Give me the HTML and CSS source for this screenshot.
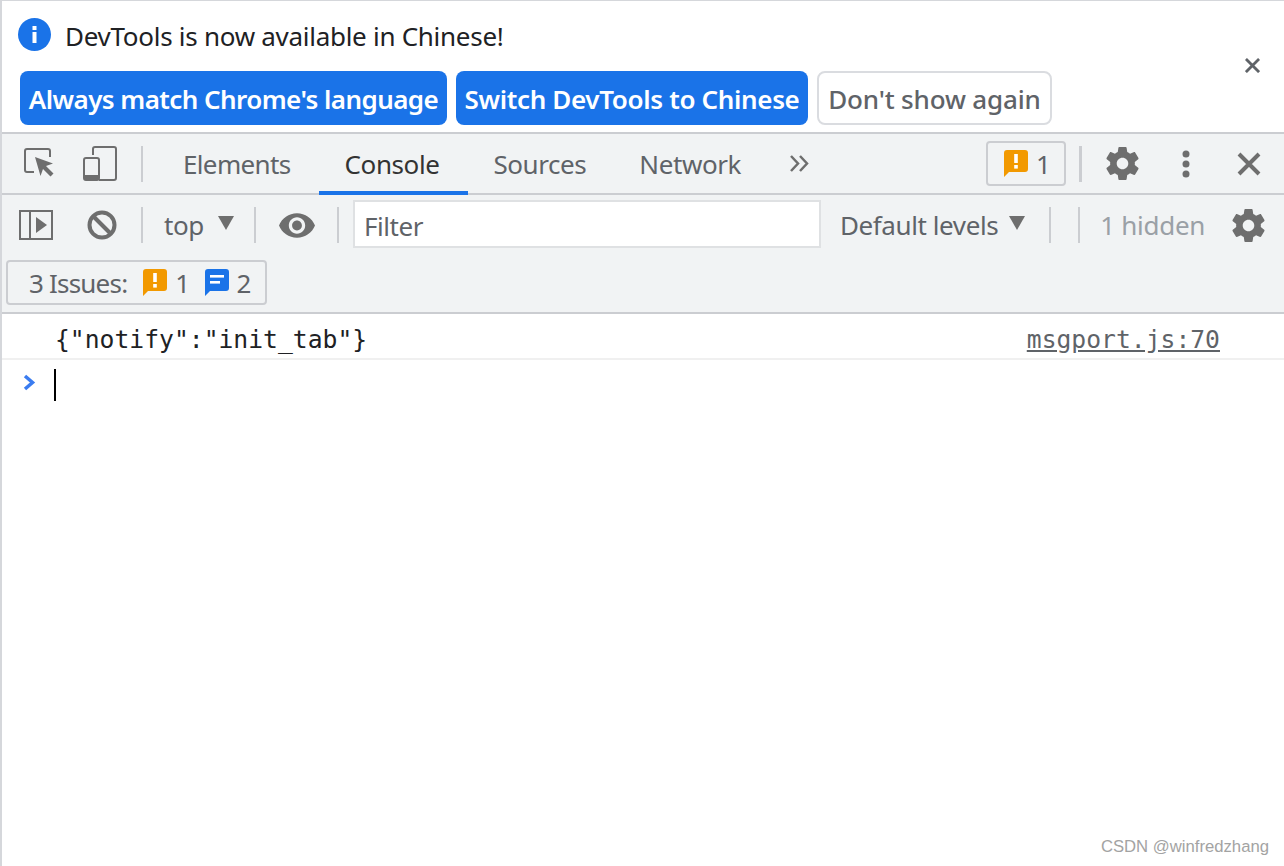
FILE: index.html
```html
<!DOCTYPE html>
<html lang="en">
<head>
<meta charset="utf-8">
<title>DevTools</title>
<link rel="stylesheet" href="styles.css">
</head>
<body>
<svg class="defs" width="0" height="0">
  <symbol id="gear" viewBox="2 2 20 20"><path d="M19.43 12.98c.04-.32.07-.64.07-.98s-.03-.66-.07-.98l2.11-1.65c.19-.15.24-.42.12-.64l-2-3.46c-.12-.22-.39-.3-.61-.22l-2.49 1c-.52-.4-1.08-.73-1.69-.98l-.38-2.65C14.46 2.18 14.25 2 14 2h-4c-.25 0-.46.18-.49.42l-.38 2.65c-.61.25-1.17.59-1.69.98l-2.49-1c-.23-.09-.49 0-.61.22l-2 3.46c-.13.22-.07.49.12.64l2.11 1.65c-.04.32-.07.65-.07.98s.03.66.07.98l-2.11 1.65c-.19.15-.24.42-.12.64l2 3.46c.12.22.39.3.61.22l2.49-1c.52.4 1.08.73 1.69.98l.38 2.65c.03.24.24.42.49.42h4c.25 0 .46-.18.49-.42l.38-2.65c.61-.25 1.17-.59 1.69-.98l2.49 1c.23.09.49 0 .61-.22l2-3.46c.12-.22.07-.49-.12-.64l-2.11-1.65zM12 15.5c-1.93 0-3.5-1.57-3.5-3.5s1.57-3.5 3.5-3.5 3.5 1.57 3.5 3.5-1.57 3.5-3.5 3.5z"/></symbol>
  <symbol id="warn" viewBox="0 0 24 27"><path d="M3 0h18a3 3 0 0 1 3 3v16a3 3 0 0 1-3 3H5l-5 5V3a3 3 0 0 1 3-3z" fill="#f29900"/><rect x="10.2" y="4" width="3.6" height="9" fill="#fff"/><rect x="10.2" y="15" width="3.6" height="3.6" fill="#fff"/></symbol>
  <symbol id="info" viewBox="0 0 24 27"><path d="M3 0h18a3 3 0 0 1 3 3v16a3 3 0 0 1-3 3H5l-5 5V3a3 3 0 0 1 3-3z" fill="#1a73e8"/><rect x="5" y="6" width="14" height="2.6" fill="#fff"/><rect x="5" y="12" width="10" height="2.6" fill="#fff"/></symbol>
  <symbol id="caret" viewBox="0 0 16 14"><path d="M0 0h16L8 14z"/></symbol>
</svg>

<div class="app">
  <section class="infobar">
    <div class="info-main">
      <div class="info-message">
        <svg class="info-icon" viewBox="0 0 33 33"><circle cx="16.5" cy="16.5" r="16.5" fill="#1a73e8"/><rect x="14.5" y="8" width="4" height="4" fill="#fff"/><rect x="14.5" y="14" width="4" height="11" fill="#fff"/></svg>
        <span>DevTools is now available in Chinese!</span>
      </div>
      <div class="info-actions">
        <button class="btn btn-primary btn-a">Always match Chrome's language</button>
        <button class="btn btn-primary btn-b">Switch DevTools to Chinese</button>
        <button class="btn btn-plain">Don't show again</button>
      </div>
    </div>
    <svg class="info-close" viewBox="0 0 16 16"><path d="M1 1l14 14M15 1L1 15"/></svg>
  </section>

  <nav class="tabbar">
    <svg class="ic ic-inspect" viewBox="0 0 32 31"><path class="ln" d="M10 24H3a2 2 0 0 1-2-2V3a2 2 0 0 1 2-2h21a2 2 0 0 1 2 2v6" /><path class="fl" d="M11 9l18 6.500-7 2.500 7.500 7.500-3 3-7.500-7.500-2.500 7z"/></svg>
    <svg class="ic ic-device" viewBox="0 0 34 35"><path class="ln" d="M10 9V3a2 2 0 0 1 2-2h19a2 2 0 0 1 2 2v29a2 2 0 0 1-2 2H16"/><path class="ln" d="M3 12h11a2 2 0 0 1 2 2v18a2 2 0 0 1-2 2H3a2 2 0 0 1-2-2V14a2 2 0 0 1 2-2z"/><rect class="fl" x="1" y="29" width="15" height="5"/></svg>
    <span class="sep sep-tab"></span>
    <div class="tabs">
      <span class="tab tab-elements">Elements</span>
      <span class="tab tab-active">Console</span>
      <span class="tab tab-sources">Sources</span>
      <span class="tab tab-network">Network</span>
    </div>
    <svg class="more" viewBox="0 0 20 17"><path d="M2 1l7 7.500-7 7.500M11 1l7 7.500-7 7.500"/></svg>
    <div class="spring"></div>
    <div class="badge badge-top"><svg class="bubble"><use href="#warn"/></svg><span>1</span></div>
    <span class="sep sep-thick"></span>
    <svg class="gear gear-top"><use href="#gear"/></svg>
    <svg class="dots" viewBox="0 0 8 28"><circle cx="4" cy="4" r="3.500"/><circle cx="4" cy="14" r="3.500"/><circle cx="4" cy="24" r="3.500"/></svg>
    <svg class="close-main" viewBox="0 0 24 24"><path d="M2 2l20 20M22 2L2 22"/></svg>
  </nav>

  <section class="console-tools">
    <div class="toolrow">
      <svg class="ic-sidebar" viewBox="0 0 34 30"><path class="ln" d="M1 1h32v28H1zM11 1v28"/><path class="fl" d="M17 7l11 8-11 8z"/></svg>
      <svg class="ic-block" viewBox="0 0 30 30"><circle cx="15" cy="15" r="12.500"/><path d="M6 6l18 18"/></svg>
      <span class="sep"></span>
      <span class="ctx">top</span>
      <svg class="caret"><use href="#caret"/></svg>
      <span class="sep sep-ctx"></span>
      <svg class="ic-eye" viewBox="1 4.500 22 15"><path d="M12 4.500C7 4.500 2.730 7.610 1 12c1.730 4.390 6 7.500 11 7.500s9.270-3.110 11-7.500c-1.730-4.390-6-7.500-11-7.500zM12 17c-2.760 0-5-2.240-5-5s2.240-5 5-5 5 2.240 5 5-2.240 5-5 5zm0-8c-1.660 0-3 1.340-3 3s1.340 3 3 3 3-1.340 3-3-1.340-3-3-3z"/></svg>
      <span class="sep sep-eye"></span>
      <div class="filter">Filter</div>
      <span class="levels">Default levels</span>
      <svg class="caret caret-lv"><use href="#caret"/></svg>
      <span class="sep sep-lv"></span>
      <span class="sep sep-lv2"></span>
      <span class="hidden-count">1 hidden</span>
      <svg class="gear gear-sub"><use href="#gear"/></svg>
    </div>
    <div class="issuerow">
      <div class="badge badge-issues">
        <span class="issues-label">3 Issues:</span>
        <svg class="bubble"><use href="#warn"/></svg><span class="num">1</span>
        <svg class="bubble bubble-info"><use href="#info"/></svg><span class="num">2</span>
      </div>
    </div>
  </section>

  <main class="log">
    <div class="log-row">
      <span class="log-msg">{"notify":"init_tab"}</span>
      <a class="log-src">msgport.js:70</a>
    </div>
    <div class="prompt">
      <svg class="chev" viewBox="0 0 13 17"><path d="M2 2l7.500 6.500L2 15"/></svg>
      <span class="cursor"></span>
    </div>
  </main>
  <div class="watermark">CSDN @winfredzhang</div>
</div>
</body>
</html>
```

FILE: styles.css
```css
* { box-sizing: border-box; }
html, body { margin: 0; padding: 0; }
body {
  width: 1284px;
  height: 866px;
  overflow: hidden;
  background: #fff;
  font-family: "Noto Sans", "Open Sans", sans-serif;
  font-size: 26px;
  color: #5f6368;
}
.defs { position: absolute; }
.app {
  position: relative;
  width: 1284px;
  height: 866px;
  border-left: 2px solid #d5d7db;
  border-top: 1px solid #d5d7db;
  display: flex;
  flex-direction: column;
}

/* info bar */
.infobar {
  height: 131px;
  display: flex;
  justify-content: space-between;
  background: #fff;
}
.info-main { padding: 17px 0 0 16px; }
.info-message {
  display: flex;
  align-items: center;
  gap: 14px;
  height: 33px;
  color: #202124;
  letter-spacing: -0.28px;
}
.info-message span { padding-top: 2px; }
.info-icon { width: 33px; height: 33px; flex: none; }
.info-actions {
  display: flex;
  gap: 9px;
  margin: 20px 0 0 2px;
}
.btn {
  height: 54px;
  padding: 2px 0 0;
  border-radius: 8px;
  font: inherit;
  font-size: 26px;
  white-space: nowrap;
  border: 2px solid transparent;
}
.btn-primary {
  background: #1a73e8;
  color: #fff;
  font-weight: 600;
}
.btn-a { width: 427px; letter-spacing: -0.57px; }
.btn-b { width: 352px; letter-spacing: -0.34px; }
.btn-plain {
  width: 235px;
  background: #fff;
  border-color: #dadce0;
  color: #5f6368;
  font-weight: 500;
  letter-spacing: -0.16px;
}
.info-close {
  width: 15px;
  height: 15px;
  margin: 57px 24px 0 0;
  fill: none;
  stroke: #5f6368;
  stroke-width: 3;
}

/* main tab bar */
.tabbar {
  height: 63px;
  flex: none;
  display: flex;
  align-items: center;
  background: #f1f3f4;
  border-top: 2px solid #cbcdd1;
  border-bottom: 2px solid #cbcdd1;
  color: #5f6368;
}
.ln { fill: none; stroke: #6e6e6e; stroke-width: 2; }
.fl { fill: #6e6e6e; stroke: none; }
.ic-inspect { width: 32px; height: 31px; margin: 0 0 0 22px; flex: none; }
.ic-device { width: 34px; height: 35px; margin: 0 0 0 27px; flex: none; }
.sep {
  width: 2px;
  height: 36px;
  background: #cbcdd1;
  flex: none;
}
.sep-tab { margin-left: 24px; }
.tabs { display: flex; height: 100%; margin-left: 13px; }
.tab {
  display: flex;
  align-items: center;
  padding: 2px 27px 0;
  letter-spacing: -0.35px;
  margin-bottom: -2px;
  border-bottom: 4px solid transparent;
  white-space: nowrap;
}
.tab-elements { letter-spacing: -0.65px; padding-right: 28px; }
.tab-active {
  color: #333;
  border-bottom-color: #1a73e8;
  letter-spacing: -0.4px;
  padding: 2px 28px 0 26px;
}
.tab-sources { padding: 2px 26px 0 26px; letter-spacing: -0.45px; }
.tab-network { letter-spacing: -0.4px; }
.more {
  width: 20px;
  height: 17px;
  margin-left: 21px;
  fill: none;
  stroke: #6e6e6e;
  stroke-width: 2.5;
}
.spring { flex: 1; }
.badge {
  display: flex;
  align-items: center;
  border: 2px solid #cbcdd1;
  border-radius: 4px;
}
.badge-top {
  width: 80px;
  height: 45px;
  padding-left: 16px;
  gap: 8px;
}
.bubble { width: 24px; height: 27px; flex: none; }
.sep-thick { width: 3px; height: 36px; margin-left: 13px; }
.gear { fill: #6e6e6e; flex: none; width: 33px; height: 33px; }
.gear-top { margin-left: 24px; }
.dots { width: 8px; height: 28px; margin: 0 2px 0 43px; fill: #6e6e6e; flex: none; }
.close-main {
  width: 24px;
  height: 24px;
  margin: 0 23px 0 45px;
  fill: none;
  stroke: #6e6e6e;
  stroke-width: 4;
  flex: none;
}

/* console toolbar */
.console-tools {
  height: 119px;
  flex: none;
  background: #f1f3f4;
  border-bottom: 2px solid #cbcdd1;
}
.toolrow {
  height: 60px;
  display: flex;
  align-items: center;
}
.ic-sidebar { width: 34px; height: 30px; margin-left: 17px; flex: none; }
.ic-block { width: 30px; height: 30px; margin: 0 24px 0 34px; fill: none; stroke: #6e6e6e; stroke-width: 4; flex: none; }
.ctx { margin-left: 21px; letter-spacing: -0.4px; }
.caret { width: 16px; height: 14px; fill: #6e6e6e; margin-left: 14px; flex: none; margin-top: -5px; }
.caret-lv { margin-left: 11px; }
.sep-ctx { margin-left: 20px; }
.ic-eye { width: 36px; height: 25px; fill: #6e6e6e; margin-left: 23px; flex: none; }
.sep-eye { margin-left: 22px; }
.filter {
  width: 468px;
  height: 48px;
  margin: 0 0 2px 14px;
  background: #fff;
  border: 2px solid #dfe1e3;
  padding-left: 9px;
  line-height: 49px;
  letter-spacing: -0.4px;
  flex: none;
}
.levels { margin-left: 19px; letter-spacing: -0.4px; white-space: nowrap; }
.sep-lv { margin-left: 24px; }
.sep-lv2 { margin-left: 27px; }
.hidden-count { margin-left: 20px; color: #9aa0a6; letter-spacing: -0.3px; white-space: nowrap; }
.gear-sub { margin-left: 27px; }
.issuerow { padding: 5px 0 0 4px; }
.badge-issues {
  width: 261px;
  height: 45px;
  padding-left: 21px;
  letter-spacing: -0.8px;
}
.issues-label { margin-right: 16px; white-space: nowrap; }
.num { margin-left: 8px; }
.bubble-info { margin-left: 16px; }
.bubble-info + .num { margin-left: 7px; }

/* log */
.log { flex: 1; }
.log-row {
  height: 46px;
  display: flex;
  justify-content: space-between;
  align-items: center;
  padding: 7px 64px 0 53px;
  border-bottom: 2px solid #f0f0f0;
  font-family: "DejaVu Sans Mono", "Liberation Mono", monospace;
  font-size: 24.7px;
  color: #202124;
}
.log-src { color: #5f6368; text-decoration: underline; }
.prompt {
  display: flex;
  align-items: center;
  padding: 9px 0 0 21px;
}
.chev { width: 13px; height: 17px; fill: none; stroke: #3a7cf0; stroke-width: 3.500; flex: none; margin-top: -6px; }
.cursor { width: 2px; height: 32px; background: #000; margin-left: 18px; }

.watermark {
  position: absolute;
  right: 15px;
  bottom: 9px;
  font-family: "Liberation Sans", sans-serif;
  font-size: 16.7px;
  color: #a3a3a3;
}
```
